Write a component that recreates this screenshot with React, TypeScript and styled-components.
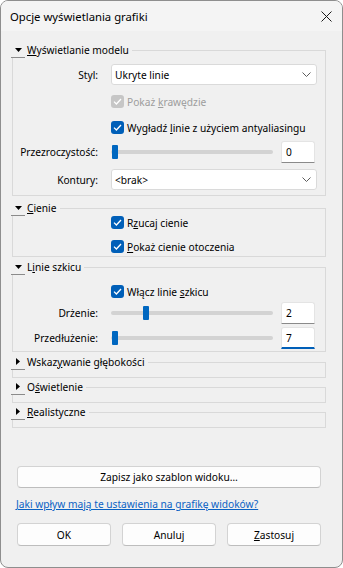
import React from 'react';
import styled, { createGlobalStyle } from 'styled-components';

const GlobalStyle = createGlobalStyle`
	* { box-sizing: border-box; }
	html, body { margin: 0; padding: 0; background: #ffffff; }
	body {
		font-family: "Noto Sans", "Open Sans", sans-serif;
		font-size: 10.2px;
		color: #000000;
	}
`;

const Window = styled.div`
	width: 343px;
	height: 568px;
	border: 1px solid #8e8e8e;
	border-radius: 8px;
	background: #f0f0f0;
	overflow: hidden;
	display: flex;
	flex-direction: column;
`;

const TitleBar = styled.div`
	height: 30px;
	flex: none;
	display: flex;
	align-items: center;
	justify-content: space-between;
	padding-left: 9px;
	background: #f4f4f4;
`;

const Title = styled.span`
	font-size: 11.3px;
	color: #000000;
`;

const CloseButton = styled.div`
	width: 32px;
	height: 30px;
	display: flex;
	align-items: center;
	justify-content: center;
`;

const Body = styled.div`
	display: flex;
	flex-direction: column;
	padding-top: 11px;
`;

const Group = styled.fieldset<{ $mt: number }>`
	margin: ${p => p.$mt}px 16px 0 11px;
	padding: 0 8px 0 0;
	border: 1px solid #d9d9d9;
	min-width: 0;
`;

const Legend = styled.legend`
	display: flex;
	align-items: center;
	height: 16px;
	padding: 0 3px 0 0;
	margin-left: -2px;
`;

const Toggle = styled.span`
	width: 14px;
	height: 16px;
	display: flex;
	align-items: center;
	justify-content: center;
	border-bottom: 1px solid #8a8a8a;
	background: #f0f0f0;
`;

const LegendText = styled.span`
	margin-left: 2px;
	line-height: 16px;
`;

const Key = styled.u`
	text-decoration: underline;
	text-underline-offset: 1px;
`;

const GroupBody = styled.div<{ $pt: number; $pb: number; $h?: number }>`
	padding: ${p => p.$pt}px 0 ${p => p.$pb}px 0;
	${p => (p.$h !== undefined ? `height: ${p.$h}px;` : '')}
`;

const FormRow = styled.div<{ $mt?: number }>`
	display: grid;
	grid-template-columns: 85px 1fr;
	column-gap: 13px;
	align-items: center;
	margin-top: ${p => p.$mt ?? 0}px;
`;

const Label = styled.span`
	grid-column: 1;
	text-align: right;
	white-space: nowrap;
`;

const Control = styled.div`
	grid-column: 2;
	min-width: 0;
`;

const Select = styled.div`
	height: 21px;
	background: #ffffff;
	border: 1px solid #dadada;
	border-radius: 3px;
	display: flex;
	align-items: center;
	justify-content: space-between;
	padding: 0 5px 0 3px;
`;

const CheckLine = styled.div<{ $disabled?: boolean }>`
	height: 13px;
	display: flex;
	align-items: center;
	gap: 3px;
	white-space: nowrap;
	color: ${p => (p.$disabled ? '#9d9d9d' : '#000000')};
`;

const Box = styled.span<{ $disabled?: boolean }>`
	width: 13px;
	height: 13px;
	flex: none;
	border-radius: 3px;
	background: ${p => (p.$disabled ? '#c6c6c6' : '#005fb8')};
	display: flex;
	align-items: center;
	justify-content: center;
`;

const SliderLine = styled.div`
	display: flex;
	align-items: center;
	gap: 8px;
	margin-right: 2px;
`;

const Slider = styled.div`
	position: relative;
	flex: 1;
	height: 14px;
	display: flex;
	align-items: center;
`;

const Track = styled.div`
	width: 100%;
	height: 4px;
	border-radius: 2px;
	background: #d3d3d3;
`;

const Thumb = styled.div`
	position: absolute;
	top: 0;
	width: 6px;
	height: 14px;
	border-radius: 1px;
	background: #0067c0;
`;

const NumberBox = styled.div<{ $focused?: boolean }>`
	width: 34px;
	height: 22px;
	flex: none;
	background: #ffffff;
	border: 1px solid #e4e4e4;
	border-bottom: ${p => (p.$focused ? '2px solid #005fb8' : '1px solid #8a8a8a')};
	border-radius: 3px 3px 0 0;
	display: flex;
	align-items: center;
	padding-left: 4px;
`;

const Footer = styled.div`
	display: flex;
	flex-direction: column;
	padding: 0 21px 0 16px;
`;

const Button = styled.div`
	height: 22px;
	background: #fdfdfd;
	border: 1px solid #d3d3d3;
	border-bottom-color: #bdbdbd;
	border-radius: 4px;
	display: flex;
	align-items: center;
	justify-content: center;
	color: #000000;
`;

const WideButton = styled(Button)`
	margin-top: 38px;
`;

const HelpLink = styled.a`
	margin: 8px 0 0 -1px;
	line-height: 16px;
	color: #0a62c4;
	text-decoration: underline;
	white-space: nowrap;
`;

const ButtonRow = styled.div`
	margin-top: 11px;
	display: grid;
	grid-template-columns: repeat(3, 94px);
	column-gap: 11px;

	${Button} {
		height: 23px;
	}
`;

const Chevron = () => (
	<svg width="9" height="5" viewBox="0 0 9 5">
		<path d="M0.5 0.5 L4.5 4.5 L8.5 0.5" fill="none" stroke="#5c5c5c" strokeWidth="1" />
	</svg>
);

const Tick = () => (
	<svg width="9" height="7" viewBox="0 0 9 7">
		<path d="M1 3.6 L3.4 6 L8 1" fill="none" stroke="#ffffff" strokeWidth="1.3" />
	</svg>
);

const Arrow = ({ open }: { open: boolean }) =>
	open ? (
		<svg width="7" height="4" viewBox="0 0 7 4">
			<polygon points="0,0 7,0 3.5,4" fill="#000000" />
		</svg>
	) : (
		<svg width="4" height="7" viewBox="0 0 4 7">
			<polygon points="0,0 4,3.5 0,7" fill="#000000" />
		</svg>
	);

const SectionHeader = ({ open, children }: { open: boolean; children: React.ReactNode }) => (
	<Legend>
		<Toggle>
			<Arrow open={open} />
		</Toggle>
		<LegendText>{children}</LegendText>
	</Legend>
);

const Check = ({ disabled, children }: { disabled?: boolean; children: React.ReactNode }) => (
	<CheckLine $disabled={disabled}>
		<Box $disabled={disabled}>
			<Tick />
		</Box>
		<span>{children}</span>
	</CheckLine>
);

const SliderField = ({ pos, value, focused }: { pos: number; value: string; focused?: boolean }) => (
	<SliderLine>
		<Slider>
			<Track />
			<Thumb style={{ left: `${1 + pos * 154}px` }} />
		</Slider>
		<NumberBox $focused={focused}>{value}</NumberBox>
	</SliderLine>
);

const App = () => {
	return (
		<>
			<GlobalStyle />
			<Window>
				<TitleBar>
					<Title>Opcje wyświetlania grafiki</Title>
					<CloseButton>
						<svg width="11" height="11" viewBox="0 0 11 11">
							<path d="M0.5 0.5 L10.5 10.5 M10.5 0.5 L0.5 10.5" stroke="#1a1a1a" strokeWidth="1" />
						</svg>
					</CloseButton>
				</TitleBar>
				<Body>
					<Group $mt={0}>
						<SectionHeader open>
							<Key>W</Key>yświetlanie modelu
						</SectionHeader>
						<GroupBody $pt={6} $pb={5}>
							<FormRow>
								<Label>Styl:</Label>
								<Control>
									<Select>
										<span>Ukryte linie</span>
										<Chevron />
									</Select>
								</Control>
							</FormRow>
							<FormRow $mt={10}>
								<Control>
									<Check disabled>
										Pokaż <Key>k</Key>rawędzie
									</Check>
								</Control>
							</FormRow>
							<FormRow $mt={13}>
								<Control>
									<Check>
										Wygładź <Key>l</Key>inie z użyciem antyaliasingu
									</Check>
								</Control>
							</FormRow>
							<FormRow $mt={7}>
								<Label>Przezroczystość:</Label>
								<Control>
									<SliderField pos={0} value="0" />
								</Control>
							</FormRow>
							<FormRow $mt={6}>
								<Label>Kontury:</Label>
								<Control>
									<Select>
										<span>&lt;brak&gt;</span>
										<Chevron />
									</Select>
								</Control>
							</FormRow>
						</GroupBody>
					</Group>

					<Group $mt={4}>
						<SectionHeader open>
							<Key>C</Key>ienie
						</SectionHeader>
						<GroupBody $pt={0} $pb={3}>
							<FormRow>
								<Control>
									<Check>
										R<Key>z</Key>ucaj cienie
									</Check>
								</Control>
							</FormRow>
							<FormRow $mt={11}>
								<Control>
									<Check>
										<Key>P</Key>okaż cienie otoczenia
									</Check>
								</Control>
							</FormRow>
						</GroupBody>
					</Group>

					<Group $mt={2}>
						<SectionHeader open>
							L<Key>i</Key>nie szkicu
						</SectionHeader>
						<GroupBody $pt={10} $pb={2}>
							<FormRow>
								<Control>
									<Check>
										Włącz linie <Key>s</Key>zkicu
									</Check>
								</Control>
							</FormRow>
							<FormRow $mt={4}>
								<Label>Drżenie:</Label>
								<Control>
									<SliderField pos={0.2} value="2" />
								</Control>
							</FormRow>
							<FormRow $mt={3}>
								<Label>Przedłużenie:</Label>
								<Control>
									<SliderField pos={0} value="7" focused />
								</Control>
							</FormRow>
						</GroupBody>
					</Group>

					<Group $mt={2}>
						<SectionHeader open={false}>
							Wskaz<Key>y</Key>wanie głębokości
						</SectionHeader>
						<GroupBody $pt={0} $pb={0} $h={7} />
					</Group>

					<Group $mt={1}>
						<SectionHeader open={false}>
							O<Key>ś</Key>wietlenie
						</SectionHeader>
						<GroupBody $pt={0} $pb={0} $h={7} />
					</Group>

					<Group $mt={1}>
						<SectionHeader open={false}>
							<Key>R</Key>ealistyczne
						</SectionHeader>
						<GroupBody $pt={0} $pb={0} $h={7} />
					</Group>
				</Body>

				<Footer>
					<WideButton>Zapisz jako szablon widoku…</WideButton>
					<HelpLink>Jaki wpływ mają te ustawienia na grafikę widoków?</HelpLink>
					<ButtonRow>
						<Button>OK</Button>
						<Button>Anuluj</Button>
						<Button>
							<Key>Z</Key>astosuj
						</Button>
					</ButtonRow>
				</Footer>
			</Window>
		</>
	);
};

export default App;
